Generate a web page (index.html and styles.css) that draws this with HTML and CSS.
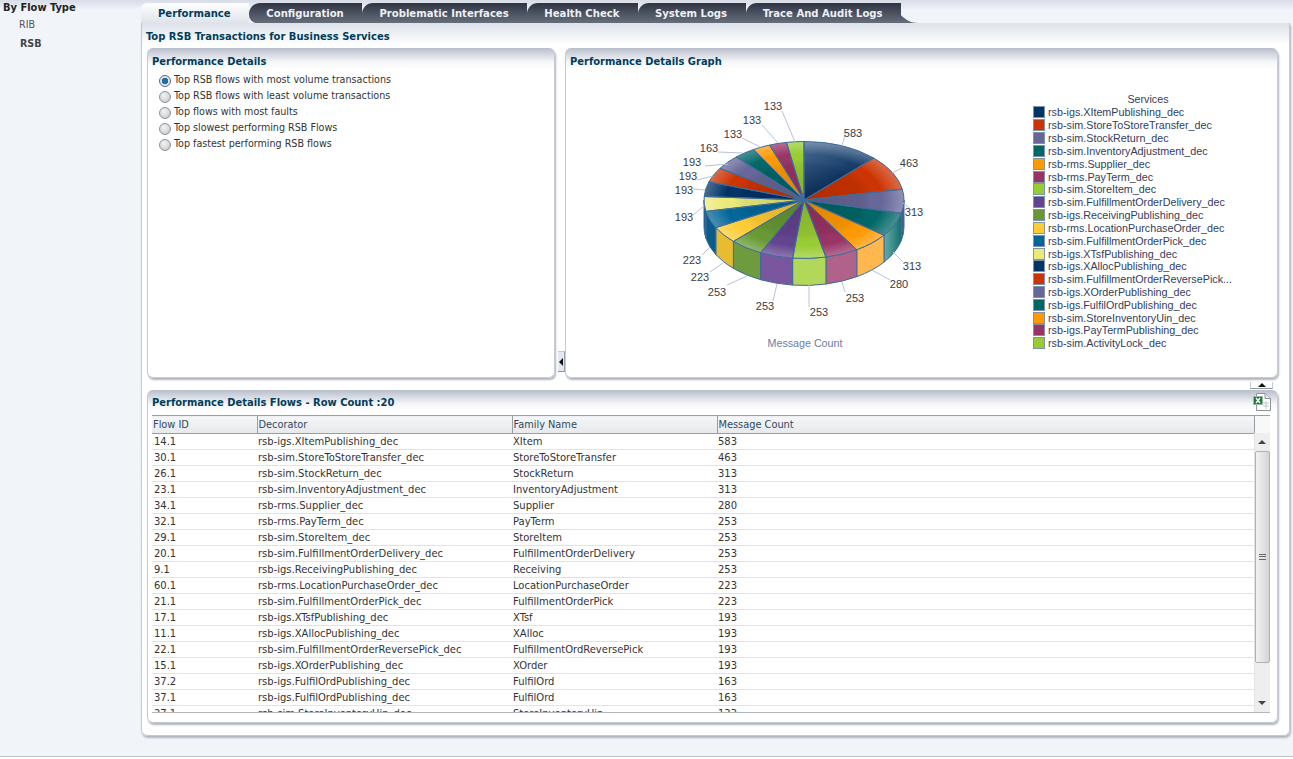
FILE: index.html
```html
<!DOCTYPE html>
<html lang="en">
<head>
<meta charset="utf-8">
<title>Performance</title>
<link rel="stylesheet" href="styles.css">
</head>
<body>
<div class="workspace">
  <aside class="sidebar">
    <div class="side-title">By Flow Type</div>
    <div class="side-item">RIB</div>
    <div class="side-item side-current">RSB</div>
  </aside>
  <main class="main">
    <nav class="tabs">
      <div class="tab tab-active">Performance</div>
      <div class="tab">Configuration</div>
      <div class="tab">Problematic Interfaces</div>
      <div class="tab">Health Check</div>
      <div class="tab">System Logs</div>
      <div class="tab">Trace And Audit Logs</div>
    </nav>
    <section class="outer">
      <h1 class="outer-title">Top RSB Transactions for Business Services</h1>
      <div class="top-row">
        <div class="panel panel-left">
          <h2 class="panel-title">Performance Details</h2>
          <ul class="radios">
            <li class="radio-row"><span class="radio radio-on"></span>Top RSB flows with most volume transactions</li>
            <li class="radio-row"><span class="radio"></span>Top RSB flows with least volume transactions</li>
            <li class="radio-row"><span class="radio"></span>Top flows with most faults</li>
            <li class="radio-row"><span class="radio"></span>Top slowest performing RSB Flows</li>
            <li class="radio-row"><span class="radio"></span>Top fastest performing RSB flows</li>
          </ul>
        </div>
        <div class="splitter"><span class="arrow-left"></span></div>
        <div class="panel panel-right">
          <h2 class="panel-title">Performance Details Graph</h2>
          <div class="chart-body">
            <svg class="pie" id="pie" viewBox="640 90 320 270" width="320" height="270">
              <defs>
                <radialGradient id="rim" cx="50%" cy="50%" r="50%">
                  <stop offset="0" stop-color="#000" stop-opacity="0.14"/>
                  <stop offset="0.6" stop-color="#000" stop-opacity="0.06"/>
                  <stop offset="0.78" stop-color="#fff" stop-opacity="0"/>
                  <stop offset="1" stop-color="#fff" stop-opacity="0.28"/>
                </radialGradient>
                <linearGradient id="navyFace" gradientUnits="userSpaceOnUse" x1="815" y1="140" x2="840" y2="185">
                  <stop offset="0" stop-color="#46688f"/>
                  <stop offset="1" stop-color="#06305f"/>
                </linearGradient>
                <linearGradient id="tealSide" gradientUnits="userSpaceOnUse" x1="883" y1="0" x2="903" y2="0">
                  <stop offset="0" stop-color="#6cb0aa"/>
                  <stop offset="1" stop-color="#0b6a68"/>
                </linearGradient>
              </defs>
              <g id="pie-sides"></g>
              <g id="pie-top"></g>
              <g class="leaders">
                <path d="M782 111L795 142M762 125L778 143M742 138L760 147M718 152L743 153M705 166L728 164M697 180L713 176M693 189L705 190M693 215L704 206M702 255L710 247M710 272L723 263M727 285L747 276M773 301L777 284M809 307L809 285M845 292L842 282M890 280L872 270M903 262L893 252M913 211L903 203M902 168L892 173M845 135L842 146"/>
              </g>
              <g class="labels">
                <text x="853" y="137">583</text><text x="909" y="167">463</text>
                <text x="914" y="216">313</text><text x="912" y="270">313</text>
                <text x="899" y="288">280</text><text x="855" y="302">253</text>
                <text x="819" y="316">253</text><text x="765" y="310">253</text>
                <text x="717" y="296">253</text><text x="700" y="281">223</text>
                <text x="692" y="264">223</text><text x="684" y="221">193</text>
                <text x="684" y="194">193</text><text x="688" y="180">193</text>
                <text x="692" y="166">193</text><text x="709" y="152">163</text>
                <text x="733" y="138">133</text><text x="752" y="124">133</text>
                <text x="773" y="110">133</text>
              </g>
              <text class="caption" x="805" y="347">Message Count</text>
            </svg>
            <div class="legend">
              <div class="legend-title">Services</div>
              <ul class="legend-list">
                <li class="legend-row"><span class="swatch c1"></span>rsb-igs.XItemPublishing_dec</li>
                <li class="legend-row"><span class="swatch c2"></span>rsb-sim.StoreToStoreTransfer_dec</li>
                <li class="legend-row"><span class="swatch c3"></span>rsb-sim.StockReturn_dec</li>
                <li class="legend-row"><span class="swatch c4"></span>rsb-sim.InventoryAdjustment_dec</li>
                <li class="legend-row"><span class="swatch c5"></span>rsb-rms.Supplier_dec</li>
                <li class="legend-row"><span class="swatch c6"></span>rsb-rms.PayTerm_dec</li>
                <li class="legend-row"><span class="swatch c7"></span>rsb-sim.StoreItem_dec</li>
                <li class="legend-row"><span class="swatch c8"></span>rsb-sim.FulfillmentOrderDelivery_dec</li>
                <li class="legend-row"><span class="swatch c9"></span>rsb-igs.ReceivingPublishing_dec</li>
                <li class="legend-row"><span class="swatch c10"></span>rsb-rms.LocationPurchaseOrder_dec</li>
                <li class="legend-row"><span class="swatch c11"></span>rsb-sim.FulfillmentOrderPick_dec</li>
                <li class="legend-row"><span class="swatch c12"></span>rsb-igs.XTsfPublishing_dec</li>
                <li class="legend-row"><span class="swatch c1"></span>rsb-igs.XAllocPublishing_dec</li>
                <li class="legend-row"><span class="swatch c2"></span>rsb-sim.FulfillmentOrderReversePick...</li>
                <li class="legend-row"><span class="swatch c3"></span>rsb-igs.XOrderPublishing_dec</li>
                <li class="legend-row"><span class="swatch c4"></span>rsb-igs.FulfilOrdPublishing_dec</li>
                <li class="legend-row"><span class="swatch c5"></span>rsb-sim.StoreInventoryUin_dec</li>
                <li class="legend-row"><span class="swatch c6"></span>rsb-igs.PayTermPublishing_dec</li>
                <li class="legend-row"><span class="swatch c7"></span>rsb-sim.ActivityLock_dec</li>
              </ul>
            </div>
          </div>
        </div>
        <div class="collapse-handle"><span class="arrow-up"></span></div>
      </div>
      <div class="panel panel-bottom">
        <div class="flows-head">
          <h2 class="panel-title">Performance Details Flows - Row Count :20</h2>
          <svg class="excel" viewBox="0 0 18 19" width="18" height="19">
            <path d="M3.5 0.5H12L17.5 5.5V17.5H3.5Z" fill="#fff" stroke="#8d9296"/>
            <path d="M12 0.5V5.5H17.5" fill="#e6e8ea" stroke="#8d9296"/>
            <path d="M10 10H16M10 13H16M13 8V16" stroke="#c3c7ca"/>
            <rect x="0.5" y="3.5" width="9" height="8" fill="#1e7a3c" stroke="#9ab9a4"/>
            <path d="M3 5L7 10M7 5L3 10" stroke="#fff" stroke-width="1.4"/>
          </svg>
        </div>
        <div class="table-wrap">
          <table class="flows">
            <colgroup><col class="col-id"><col class="col-dec"><col class="col-fam"><col class="col-msg"><col class="col-fill"></colgroup>
            <thead><tr><th>Flow ID</th><th>Decorator</th><th>Family Name</th><th>Message Count</th><th class="th-fill"></th></tr></thead>
            <tbody>
              <tr><td>14.1</td><td>rsb-igs.XItemPublishing_dec</td><td>XItem</td><td>583</td><td></td></tr>
              <tr><td>30.1</td><td>rsb-sim.StoreToStoreTransfer_dec</td><td>StoreToStoreTransfer</td><td>463</td><td></td></tr>
              <tr><td>26.1</td><td>rsb-sim.StockReturn_dec</td><td>StockReturn</td><td>313</td><td></td></tr>
              <tr><td>23.1</td><td>rsb-sim.InventoryAdjustment_dec</td><td>InventoryAdjustment</td><td>313</td><td></td></tr>
              <tr><td>34.1</td><td>rsb-rms.Supplier_dec</td><td>Supplier</td><td>280</td><td></td></tr>
              <tr><td>32.1</td><td>rsb-rms.PayTerm_dec</td><td>PayTerm</td><td>253</td><td></td></tr>
              <tr><td>29.1</td><td>rsb-sim.StoreItem_dec</td><td>StoreItem</td><td>253</td><td></td></tr>
              <tr><td>20.1</td><td>rsb-sim.FulfillmentOrderDelivery_dec</td><td>FulfillmentOrderDelivery</td><td>253</td><td></td></tr>
              <tr><td>9.1</td><td>rsb-igs.ReceivingPublishing_dec</td><td>Receiving</td><td>253</td><td></td></tr>
              <tr><td>60.1</td><td>rsb-rms.LocationPurchaseOrder_dec</td><td>LocationPurchaseOrder</td><td>223</td><td></td></tr>
              <tr><td>21.1</td><td>rsb-sim.FulfillmentOrderPick_dec</td><td>FulfillmentOrderPick</td><td>223</td><td></td></tr>
              <tr><td>17.1</td><td>rsb-igs.XTsfPublishing_dec</td><td>XTsf</td><td>193</td><td></td></tr>
              <tr><td>11.1</td><td>rsb-igs.XAllocPublishing_dec</td><td>XAlloc</td><td>193</td><td></td></tr>
              <tr><td>22.1</td><td>rsb-sim.FulfillmentOrderReversePick_dec</td><td>FulfillmentOrdReversePick</td><td>193</td><td></td></tr>
              <tr><td>15.1</td><td>rsb-igs.XOrderPublishing_dec</td><td>XOrder</td><td>193</td><td></td></tr>
              <tr><td>37.2</td><td>rsb-igs.FulfilOrdPublishing_dec</td><td>FulfilOrd</td><td>163</td><td></td></tr>
              <tr><td>37.1</td><td>rsb-igs.FulfilOrdPublishing_dec</td><td>FulfilOrd</td><td>163</td><td></td></tr>
              <tr><td>27.1</td><td>rsb-sim.StoreInventoryUin_dec</td><td>StoreInventoryUin</td><td>133</td><td></td></tr>
            </tbody>
          </table>
          <div class="scrollbar">
            <span class="sb-up"></span>
            <div class="sb-thumb"><span class="sb-grip"></span></div>
            <span class="sb-down"></span>
          </div>
        </div>
      </div>
    </section>
  </main>
</div>
<div class="footer"></div>
<script src="chart.js"></script>
</body>
</html>
```
FILE: styles.css
```css
* { box-sizing: border-box; }
html, body { margin: 0; padding: 0; }
body {
  height: 759px;
  overflow: hidden;
  background: linear-gradient(#d7dce6 0, #f1f5fa 10px);
  font-family: "DejaVu Sans Condensed", "DejaVu Sans", sans-serif;
  font-stretch: condensed;
  font-size: 10.65px;
  color: #333;
}
h1, h2, ul { margin: 0; padding: 0; }
ul { list-style: none; }

.workspace { display: flex; height: 756px; }
.footer { height: 3px; background: #fff; border-top: 1px solid #b9c0cc; }

.sidebar { width: 141px; flex: none; padding-top: 1px; }
.side-title { font-weight: 700; font-size: 11px; color: #222; padding-left: 3px; height: 15px; line-height: 13px; }
.side-item { color: #555; padding-left: 19px; height: 19px; line-height: 17px; }
.side-current { font-weight: 700; color: #444; padding-left: 20px; }

.main { width: 1149px; flex: none; padding-top: 3px; }
.tabs { position: relative; z-index: 0; isolation: isolate; display: flex; height: 20px; }
.tab {
  position: relative;
  height: 20px;
  padding: 0 18.7px 0 17px;
  font-weight: 700;
  font-size: 11.2px;
  line-height: 21px;
  color: #eef0f4;
  background: linear-gradient(#2f3543, #666d7b);
  border-radius: 11px 0 0 8px;
  white-space: nowrap;
}
.tab::after {
  content: "";
  position: absolute;
  top: 0;
  right: -17px;
  width: 36px;
  height: 20px;
  background: linear-gradient(#2f3543, #666d7b);
  clip-path: path("M0 0 C14 0 18 20 36 20 L0 20 Z");
  z-index: -1;
}
.tab-active {
  z-index: 2;
  color: #003d5b;
  background: linear-gradient(#fff, #dfe3ea);
  border-radius: 6px 0 0 0;
}
.tab-active::after {
  right: -3px;
  width: 22px;
  background: linear-gradient(#fff, #dfe3ea);
  clip-path: path("M0 0 C8 0 12 20 22 20 L0 20 Z");
}

.outer {
  position: relative;
  height: 713px;
  padding: 0 11px 0 5px;
  background: linear-gradient(#dde1e9, #fff 22px);
  border: 1px solid #c3c8d3;
  border-top: 0;
  border-radius: 0 0 6px 6px;
  box-shadow: 1px 2px 2px #b0b5c1;
}
.outer-title {
  height: 25px;
  margin-left: -1px;
  font-size: 11.1px;
  line-height: 27px;
  color: #003d5b;
}
.panel {
  background: linear-gradient(#b8bdcb, #f6f7f9 14px, #fff 22px);
  border: 1px solid #c6cad4;
  border-top: 0;
  border-radius: 6px;
  box-shadow: 1px 2px 2px #b0b5c1;
}
.panel-title {
  height: 25px;
  padding-left: 4px;
  font-size: 11.05px;
  line-height: 27px;
  color: #003d5b;
}
.top-row { position: relative; display: flex; height: 330px; margin-bottom: 12px; }
.panel-left { width: 408px; flex: none; }
.panel-right { flex: 1; }
.splitter { width: 10px; flex: none; display: flex; align-items: flex-end; justify-content: flex-end; padding-bottom: 6px; }
.arrow-left {
  display: flex;
  align-items: center;
  justify-content: center;
  width: 7px;
  height: 21px;
  background: #e4e8ef;
  border-right: 1px solid #9aa2b0;
  border-top: 1px solid #c6cad4;
  border-bottom: 1px solid #8b93a2;
}
.arrow-left::before {
  content: "";
  border-style: solid;
  border-width: 4px 4px 4px 0;
  border-color: transparent #111 transparent transparent;
}
.collapse-handle {
  position: absolute;
  right: 5px;
  bottom: -11px;
  width: 23px;
  height: 7px;
  background: #fff;
  border-bottom: 1px solid #8d95a3;
  border-left: 1px solid #c6cad4;
  border-right: 1px solid #c6cad4;
  display: flex;
  justify-content: center;
  align-items: center;
}
.arrow-up {
  border-style: solid;
  border-width: 0 4px 4px;
  border-color: transparent transparent #111;
}

.radios { padding-left: 11px; }
.radio-row { display: flex; height: 16px; line-height: 14px; white-space: nowrap; }
.radio {
  width: 12px;
  height: 12px;
  margin: 2px 3px 0 0;
  flex: none;
  border-radius: 50%;
  border: 1px solid #8e939a;
  background: radial-gradient(circle at 40% 35%, #f4f4f4, #bfc1c3);
}
.radio-on {
  border-color: #5f6b79;
  background: radial-gradient(circle, #1f6ea8 0 3px, #dfe5ea 3.5px);
}

.chart-body { display: flex; padding: 17px 0 0 74px; }
.pie { flex: none; display: block; }
.pie text { font-family: "Liberation Sans", Arial, sans-serif; font-size: 11px; fill: #3a3a44; text-anchor: middle; font-stretch: normal; }
.pie .caption { fill: #6a7da6; font-size: 10.7px; }
.leaders path { fill: none; stroke: #b9c3d6; stroke-width: 1; }
.legend {
  width: 230px;
  margin-left: 73px;
  margin-top: 3px;
  font-family: "Liberation Sans", Arial, sans-serif;
  font-stretch: normal;
  font-size: 10.75px;
  color: #34405a;
}
.legend-title { text-align: center; height: 13px; line-height: 12px; color: #3c3c50; }
.legend-row { display: flex; align-items: center; height: 12.84px; white-space: nowrap; }
.swatch { width: 12px; height: 12px; margin-right: 3px; flex: none; border: 1px solid #7f92aa; }
.c1 { background: #003366; } .c2 { background: #cc3300; } .c3 { background: #666699; }
.c4 { background: #006666; } .c5 { background: #ff9900; } .c6 { background: #993366; }
.c7 { background: #99cc33; } .c8 { background: #624390; } .c9 { background: #669933; }
.c10 { background: #ffcc33; } .c11 { background: #006699; } .c12 { background: #ebea79; }

.panel-bottom { height: 333px; padding: 0 0 0 4px; }
.flows-head { position: relative; height: 25px; }
.flows-head .panel-title { padding-left: 0; line-height: 25px; }
.excel { position: absolute; top: 3px; right: 6px; }
.table-wrap {
  position: relative;
  width: 1118px;
  height: 298px;
  overflow: hidden;
  border-bottom: 1px solid #b3b6bb;
}
.flows { width: 1118px; table-layout: fixed; border-collapse: collapse; }
.col-id { width: 105px; } .col-dec { width: 255px; } .col-fam { width: 205px; }
.col-msg { width: 537px; } .col-fill { width: 16px; }
.flows th {
  height: 18px;
  padding: 0 0 1px 1px;
  font-size: 10.9px;
  font-weight: 400;
  text-align: left;
  color: #2f4a5e;
  background: linear-gradient(#f6f6f7, #e6e8ec);
  border-top: 1px solid #9a9fa6;
  border-bottom: 1px solid #9a9fa6;
  border-right: 1px solid #9a9fa6;
}
.flows .th-fill { border-right: 0; background: #f8f9f6; border-bottom-color: transparent; }
.flows td {
  height: 16px;
  padding: 0 0 1px 1px;
  font-size: 11.1px;
  line-height: 13px;
  white-space: nowrap;
  overflow: hidden;
  border-bottom: 1px solid #e2e3e4;
}
.flows td:first-child { padding-left: 2px; }
.scrollbar {
  position: absolute;
  top: 18px;
  right: 0;
  bottom: 0;
  width: 16px;
  background: #eeeeee;
  border-left: 1px solid #e4e4e4;
}
.sb-up, .sb-down {
  position: absolute;
  left: 3px;
  border-style: solid;
  border-color: transparent;
}
.sb-up { top: 7px; border-width: 0 4px 4px; border-bottom-color: #444; }
.sb-down { bottom: 7px; border-width: 4px 4px 0; border-top-color: #444; }
.sb-thumb {
  position: absolute;
  top: 18px;
  left: 0;
  right: 0;
  height: 212px;
  background: linear-gradient(90deg, #f3f3f3, #d4d4d6);
  border: 1px solid #aeb0b4;
  border-radius: 2px;
}
.sb-grip {
  position: absolute;
  top: 102px;
  left: 3px;
  width: 7px;
  height: 6px;
  border-top: 1px solid #666;
  border-bottom: 1px solid #666;
}
.sb-grip::before {
  content: "";
  display: block;
  margin-top: 1px;
  border-top: 1px solid #666;
}
```
FILE: chart.js
```js
(function () {
  var NS = "http://www.w3.org/2000/svg";
  var cx = 804, cy = 200, rx = 100, ry = 58.5, depth = 27, edge = "#3f6b9a";
  var values = [583, 463, 313, 313, 280, 253, 253, 253, 253, 223, 223, 193, 193, 193, 193, 163, 133, 133, 133];
  var top = ["#003366", "#cc3300", "#666699", "#006666", "#ff9900", "#993366", "#99cc33", "#624390", "#669933", "#ffcc33", "#006699", "#ebea79"];
  var side = { 2: "#44608f", 3: "url(#tealSide)", 4: "#ffb84d", 5: "#b0628a", 6: "#b2d85a", 7: "#7a55a0", 8: "#6f9a40", 9: "#e8bc30", 10: "#0a5c8a", 11: "#0a5c8a" };
  var total = values.reduce(function (a, b) { return a + b; }, 0);
  var sides = document.getElementById("pie-sides");
  var face = document.getElementById("pie-top");

  function add(parent, name, attrs) {
    var el = document.createElementNS(NS, name);
    Object.keys(attrs).forEach(function (k) { el.setAttribute(k, attrs[k]); });
    parent.appendChild(el);
    return el;
  }
  function pt(a, dy) {
    return (cx + rx * Math.sin(a)).toFixed(2) + " " + (cy - ry * Math.cos(a) + (dy || 0)).toFixed(2);
  }

  var slices = [], start = 0;
  values.forEach(function (v, i) {
    var end = start + v / total * Math.PI * 2;
    slices.push({ a: start, b: end, color: i === 0 ? "url(#navyFace)" : top[i % top.length], i: i });
    start = end;
  });

  slices.forEach(function (s) {
    var a = Math.max(s.a, Math.PI / 2), b = Math.min(s.b, Math.PI * 1.5);
    if (b <= a) return;
    add(sides, "path", {
      d: "M" + pt(a) + "A" + rx + " " + ry + " 0 0 1 " + pt(b) + "L" + pt(b, depth) +
         "A" + rx + " " + ry + " 0 0 0 " + pt(a, depth) + "Z",
      fill: side[s.i] || "#0a5c8a", stroke: edge, "stroke-width": 1
    });
  });

  function wedge(s) {
    return "M" + cx + " " + cy + "L" + pt(s.a) + "A" + rx + " " + ry + " 0 " +
           (s.b - s.a > Math.PI ? 1 : 0) + " 1 " + pt(s.b) + "Z";
  }
  slices.forEach(function (s) { add(face, "path", { d: wedge(s), fill: s.color }); });
  add(face, "ellipse", { cx: cx, cy: cy, rx: rx, ry: ry, fill: "url(#rim)" });
  slices.forEach(function (s) { add(face, "path", { d: wedge(s), fill: "none", stroke: edge, "stroke-width": 1 }); });
})();
```
